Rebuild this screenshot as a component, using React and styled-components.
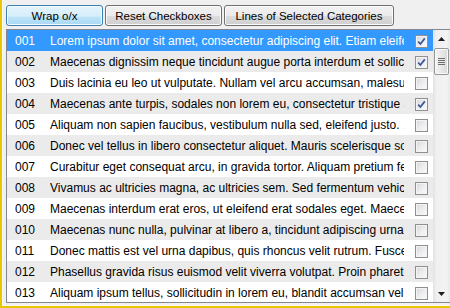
import React, { useState } from "react";
import styled, { createGlobalStyle } from "styled-components";

const GlobalStyle = createGlobalStyle`
  html, body {
    margin: 0;
    padding: 0;
    background: #f0f0f0;
  }
`;

const Frame = styled.div`
  width: 450px;
  height: 308px;
  box-sizing: border-box;
  display: flex;
  flex-direction: column;
  overflow: hidden;
  background: #f0f0f0;
  border-left: 2px solid #e8c700;
  border-bottom: 2px solid #e8c700;
  font-family: "Liberation Sans", Arial, sans-serif;
`;

const Content = styled.div`
  flex: 1;
  min-height: 0;
  display: flex;
  flex-direction: column;
  padding: 5px 0 0 3px;
  border-left: 1px solid #fbfbf2;
  border-bottom: 1px solid #fbfbf2;
`;

const Toolbar = styled.div`
  display: flex;
  gap: 2px;
  height: 21px;
  margin-bottom: 3px;
`;

const Button = styled.button`
  width: ${(p) => p.$w}px;
  height: 21px;
  padding: 0;
  box-sizing: border-box;
  border-radius: 3px;
  font-family: "Liberation Sans", Arial, sans-serif;
  font-size: 11.5px;
  color: #000;
  border: 1px solid ${(p) => (p.$focused ? "#3c7fb1" : "#707070")};
  box-shadow: inset 0 0 0 1px ${(p) => (p.$focused ? "#f4fbff" : "#fbfbfb")};
  background: ${(p) =>
    p.$focused
      ? "linear-gradient(#e5f4fc 0%, #d4eefb 55%, #bde4f9 56%, #a9d8f3 100%)"
      : "linear-gradient(#f2f2f2 0%, #ebebeb 50%, #dddddd 51%, #cfcfcf 100%)"};
`;

const List = styled.div`
  flex: 1;
  min-height: 0;
  margin-bottom: 2px;
  display: flex;
  background: #fff;
  border: 1px solid #828790;
  border-right: none;
`;

const Rows = styled.div`
  flex: 1;
  min-width: 0;
  overflow: hidden;
`;

const Row = styled.div`
  display: grid;
  grid-template-columns: 24px 1fr 13px;
  column-gap: 11px;
  align-items: center;
  height: 21px;
  padding: 0 5px 0 8px;
  font-size: 12px;
  color: ${(p) => (p.$selected ? "#fff" : "#000")};
  background: ${(p) => (p.$selected ? "#3399ff" : p.$alt ? "#ebebeb" : "#fff")};
`;

const Cell = styled.span`
  white-space: nowrap;
  overflow: hidden;
`;

const Check = styled.span`
  width: 13px;
  height: 13px;
  margin-top: 1px;
  box-sizing: border-box;
  display: flex;
  align-items: center;
  justify-content: center;
  border: 1px solid #8e8f8f;
  box-shadow: inset 0 0 0 1px #f4f4f4;
  background: linear-gradient(135deg, #d3d6da 0%, #ebecee 50%, #fbfbfb 100%);
`;

const ScrollBar = styled.div`
  width: 17px;
  display: flex;
  flex-direction: column;
  background: linear-gradient(to right, #e2e2e2 0%, #f0f0f0 20%, #f3f3f3 80%, #e9e9e9 100%);
`;

const Arrow = styled.div`
  height: 17px;
  display: flex;
  align-items: center;
  justify-content: center;
`;

const Track = styled.div`
  flex: 1;
  padding: 1px 1px 0;
`;

const Thumb = styled.div`
  height: 27px;
  box-sizing: border-box;
  border: 1px solid #979797;
  border-radius: 2px;
  box-shadow: inset 0 0 0 1px #fafafa;
  background: linear-gradient(to right, #f3f3f3 0%, #e8e8e8 50%, #d9d9d9 100%);
  display: flex;
  align-items: center;
  justify-content: center;
`;

const rows = [
  "Lorem ipsum dolor sit amet, consectetur adipiscing elit. Etiam eleifend nisl",
  "Maecenas dignissim neque tincidunt augue porta interdum et sollicitudin",
  "Duis lacinia eu leo ut vulputate. Nullam vel arcu accumsan, malesuada",
  "Maecenas ante turpis, sodales non lorem eu, consectetur tristique ante",
  "Aliquam non sapien faucibus, vestibulum nulla sed, eleifend justo. .",
  "Donec vel tellus in libero consectetur aliquet. Mauris scelerisque sodales",
  "Curabitur eget consequat arcu, in gravida tortor. Aliquam pretium felis",
  "Vivamus ac ultricies magna, ac ultricies sem. Sed fermentum vehicula",
  "Maecenas interdum erat eros, ut eleifend erat sodales eget. Maecenas",
  "Maecenas nunc nulla, pulvinar at libero a, tincidunt adipiscing urna",
  "Donec mattis est vel urna dapibus, quis rhoncus velit rutrum. Fusce",
  "Phasellus gravida risus euismod velit viverra volutpat. Proin pharetra",
  "Aliquam ipsum tellus, sollicitudin in lorem eu, blandit accumsan vel",
];

function Tick() {
  return (
    <svg width="9" height="9" viewBox="0 0 9 9">
      <path d="M1.2 4.6 L3.4 7 L7.8 1.4" fill="none" stroke="#3a5596" strokeWidth="1.7" />
    </svg>
  );
}

export default function App() {
  const [checked, setChecked] = useState([true, true, false, true]);
  const [selected, setSelected] = useState(0);

  const toggle = (i) => {
    setChecked((prev) => {
      const next = [...prev];
      next[i] = !next[i];
      return next;
    });
  };

  return (
    <>
      <GlobalStyle />
      <Frame>
        <Content>
          <Toolbar>
            <Button $w={97} $focused>
              Wrap o/x
            </Button>
            <Button $w={117} onClick={() => setChecked([])}>
              Reset Checkboxes
            </Button>
            <Button $w={170}>Lines of Selected Categories</Button>
          </Toolbar>
          <List>
            <Rows>
              {rows.map((text, i) => (
                <Row key={i} $selected={i === selected} $alt={i % 2 === 1} onClick={() => setSelected(i)}>
                  <Cell>{String(i + 1).padStart(3, "0")}</Cell>
                  <Cell>{text}</Cell>
                  <Check onClick={() => toggle(i)}>{checked[i] && <Tick />}</Check>
                </Row>
              ))}
            </Rows>
            <ScrollBar>
              <Arrow>
                <svg width="7" height="4" viewBox="0 0 7 4">
                  <path d="M0 4 L3.5 0 L7 4 Z" fill="#1e1e1e" />
                </svg>
              </Arrow>
              <Track>
                <Thumb>
                  <svg width="7" height="7" viewBox="0 0 7 7">
                    <path d="M0 0.5 H7 M0 2.5 H7 M0 4.5 H7 M0 6.5 H7" stroke="#6e6e6e" strokeWidth="1" />
                  </svg>
                </Thumb>
              </Track>
              <Arrow>
                <svg width="7" height="4" viewBox="0 0 7 4">
                  <path d="M0 0 L7 0 L3.5 4 Z" fill="#1e1e1e" />
                </svg>
              </Arrow>
            </ScrollBar>
          </List>
        </Content>
      </Frame>
    </>
  );
}
